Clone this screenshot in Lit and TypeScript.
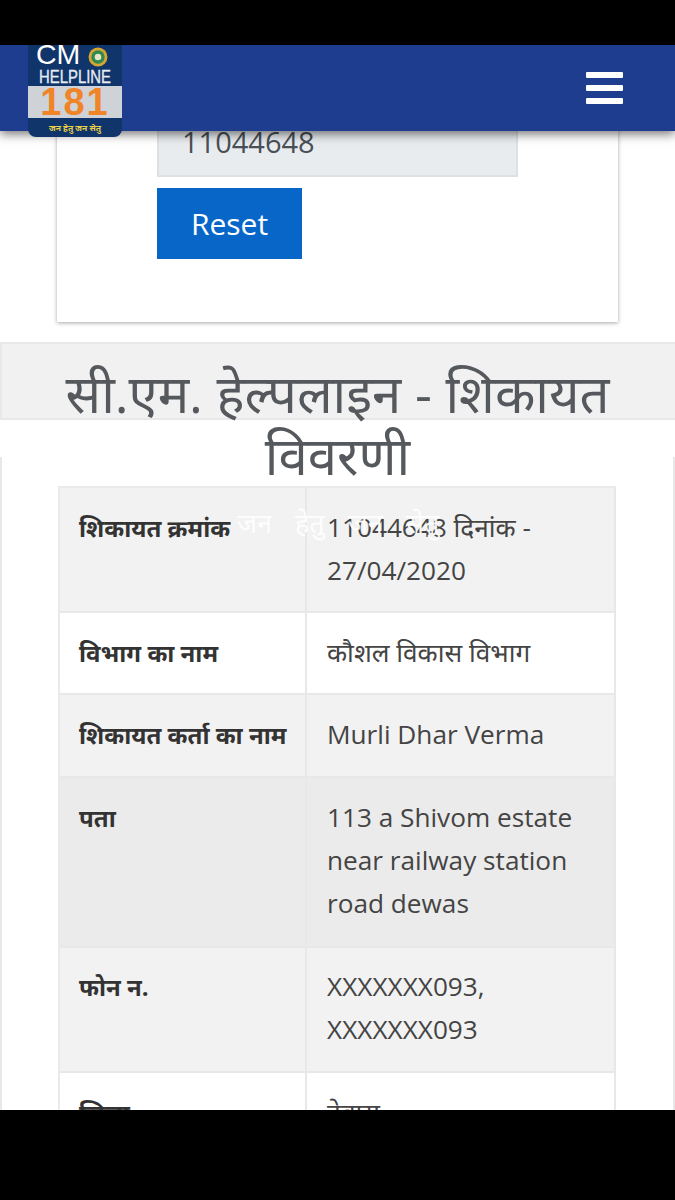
import { LitElement, html, css } from "lit";
import { customElement } from "lit/decorators.js";

const rows: [string, string, string][] = [
  ["शिकायत क्रमांक", "11044648 दिनांक - 27/04/2020", "odd"],
  ["विभाग का नाम", "कौशल विकास विभाग", ""],
  ["शिकायत कर्ता का नाम", "Murli Dhar Verma", "odd tall"],
  ["पता", "113 a Shivom estate near railway station road dewas", "hover"],
  ["फोन न.", "XXXXXXX093, XXXXXXX093", "odd up"],
  ["जिला", "देवास", ""],
];

@customElement("app-root")
export class AppRoot extends LitElement {
  static styles = css`
    :host { display: block; width: 675px; height: 1200px; overflow: hidden; background: #000;
      font-family: "Open Sans", "Noto Sans", sans-serif; }
    .status { height: 45px; background: #000; }
    .screen { height: 1065px; overflow: hidden; background: #fff; position: relative; }
    header { height: 86px; background: #1e3d8f; box-shadow: 0 3px 10px rgba(0,0,0,.55); position: relative; z-index: 3;
      display: flex; justify-content: space-between; align-items: flex-start; padding: 0 52px 0 28px; }
    .logo { width: 94px; height: 92px; background: #10356b; border-radius: 0 0 8px 8px; display: flex; flex-direction: column; flex: none; overflow: hidden; }
    .cm { height: 22px; color: #fff; font: 400 28.5px/19px "Liberation Sans", sans-serif; padding-left: 8px; display: flex; gap: 8px; align-items: flex-start; }
    .emblem { width: 20px; height: 20px; flex: none; margin-top: 2px; }
    .hl { color: #e8edf3; font: 400 17.5px/20px "Liberation Sans", sans-serif; -webkit-text-stroke: .3px #e8edf3; text-align: center; height: 19px; white-space: nowrap; transform: scaleX(.85); }
    .n181 { height: 32px; background: #cfd2d6; color: #f08428; font: 700 38px/33px "Liberation Sans", sans-serif; letter-spacing: 2px; text-align: center; }
    .slogan { color: #e7cf4a; font: 700 8.5px/19px "Noto Sans", sans-serif; text-align: center; white-space: nowrap; }
    .menu { display: flex; flex-direction: column; gap: 7px; padding-top: 27px; }
    .menu i { display: block; width: 37px; height: 6px; background: #fff; border-radius: 1px; }
    .flow { margin-top: -131px; }
    .card { margin: 0 57px; padding: 101px 100px 62px; height: 322px; box-sizing: border-box; background: #fff; box-shadow: 0 1px 4px rgba(0,0,0,.35); }
    .input { height: 76px; box-sizing: border-box; background: #e9ecef; border: 2px solid #dee1e4; color: #495057; font-size: 29px; line-height: 1; padding: 24px 23px 0; }
    .btn { display: block; margin-top: 11px; width: 145px; height: 71px; background: #0966c9; color: #fff; font-size: 30px; line-height: 71px; text-align: center; }
    .band { height: 78px; margin-top: 20px; background: #f1f1f1; border: 2px solid #e8e8e8; border-width: 2px 0 2px 2px; box-sizing: border-box; }
    .body { margin-top: -78px; }
    h1 { margin: 0; padding: 20px 30px 0; position: relative; font-size: 52.6px; line-height: 62px; font-weight: 400; color: #55585c; text-align: center; }
    .panel { margin-top: -29px; padding: 29px 57px 0 56px; border: solid #e8e8e8; border-width: 0 2px; }
    .table { display: grid; grid-template-columns: 247px 309px; border: solid #eaeaea; border-width: 2px 0 0 2px; position: relative; }
    .cell { padding: 18px 19px 19px 20px; font-size: 26.2px; line-height: 43px; color: #444; border-right: 2px solid #e8e8e8; border-bottom: 2px solid #e8e8e8; box-sizing: border-box; }
    .th { font-weight: 700; color: #333; font-size: 24px; padding-left: 19px; padding-right: 4px; white-space: nowrap; }
    .odd { background: #f2f2f2; }
    .tall { padding-top: 18px; padding-bottom: 20px; }
    .hover { background: #ebebeb; padding-top: 18px; padding-bottom: 21px; }
    .up { padding-top: 17px; padding-bottom: 20px; }
    .mark { position: absolute; left: 177px; top: 13px; color: #fff; font-size: 27px; line-height: 43px; word-spacing: 16px; white-space: nowrap; opacity: .92; }
    .nav { height: 90px; background: #000; }
  `;

  render() {
    return html`
      <div class="status"></div>
      <div class="screen">
        <header>
          <div class="logo">
            <div class="cm">CM
              <svg class="emblem" viewBox="0 0 18 18"><circle cx="9" cy="9" r="8.5" fill="#d9a531"/><circle cx="9" cy="9" r="6" fill="#2f8a4e"/><circle cx="9" cy="9" r="3" fill="#e8e4c8"/></svg>
            </div>
            <div class="hl">HELPLINE</div>
            <div class="n181">181</div>
            <div class="slogan">जन हेतु जन सेतु</div>
          </div>
          <div class="menu"><i></i><i></i><i></i></div>
        </header>
        <div class="flow">
          <div class="card">
            <div class="input">11044648</div>
            <div class="btn">Reset</div>
          </div>
          <div class="band"></div>
          <div class="body">
            <h1>सी.एम. हेल्पलाइन - शिकायत विवरणी</h1>
            <div class="panel">
              <div class="table">
                ${rows.map(([k, v, cls]) => html`
                  <div class="cell th ${cls}">${k}</div>
                  <div class="cell ${cls}">${v}</div>
                `)}
                <div class="mark">जन हेतु जन सेतु</div>
              </div>
            </div>
          </div>
        </div>
      </div>
      <div class="nav"></div>
    `;
  }
}
